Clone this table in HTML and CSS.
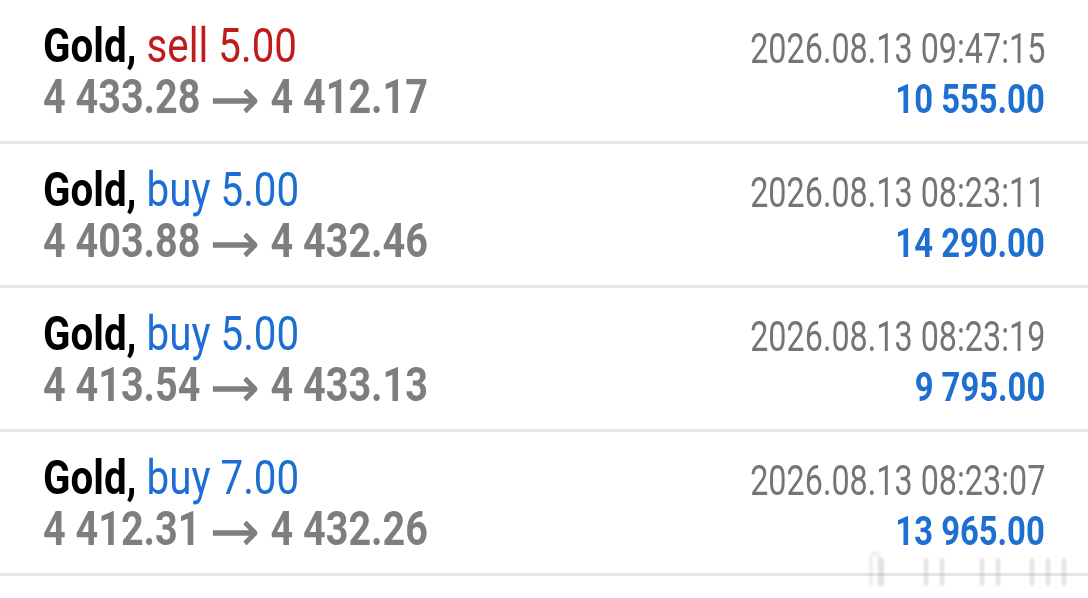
FILE: index.html
```html
<!DOCTYPE html>
<html>
<head>
<meta charset="utf-8">
<link rel="stylesheet" href="styles.css">
</head>
<body>
<div class="list">
  <div class="row">
    <div class="left">
      <div class="line"><span class="sx sx-l s1"><b class="sym">Gold,</b> <span class="sell">sell 5.00</span></span></div>
      <div class="line"><span class="sx sx-l s2 price">4 433.28<svg class="arrow" viewBox="0 0 54 24" preserveAspectRatio="none"><path d="M0 12H51M39 1.5L51.5 12L39 22.5"/></svg>4 412.17</span></div>
    </div>
    <div class="right">
      <div class="line time"><span class="sx sx-r s3">2026.08.13 09:47:15</span></div>
      <div class="line amount"><span class="sx sx-r s4">10 555.00</span></div>
    </div>
  </div>
  <div class="row">
    <div class="left">
      <div class="line"><span class="sx sx-l s1"><b class="sym">Gold,</b> <span class="buy">buy 5.00</span></span></div>
      <div class="line"><span class="sx sx-l s2 price">4 403.88<svg class="arrow" viewBox="0 0 54 24" preserveAspectRatio="none"><path d="M0 12H51M39 1.5L51.5 12L39 22.5"/></svg>4 432.46</span></div>
    </div>
    <div class="right">
      <div class="line time"><span class="sx sx-r s3">2026.08.13 08:23:11</span></div>
      <div class="line amount"><span class="sx sx-r s4">14 290.00</span></div>
    </div>
  </div>
  <div class="row">
    <div class="left">
      <div class="line"><span class="sx sx-l s1"><b class="sym">Gold,</b> <span class="buy">buy 5.00</span></span></div>
      <div class="line"><span class="sx sx-l s2 price">4 413.54<svg class="arrow" viewBox="0 0 54 24" preserveAspectRatio="none"><path d="M0 12H51M39 1.5L51.5 12L39 22.5"/></svg>4 433.13</span></div>
    </div>
    <div class="right">
      <div class="line time"><span class="sx sx-r s3">2026.08.13 08:23:19</span></div>
      <div class="line amount"><span class="sx sx-r s4">9 795.00</span></div>
    </div>
  </div>
  <div class="row">
    <div class="left">
      <div class="line"><span class="sx sx-l s1"><b class="sym">Gold,</b> <span class="buy">buy 7.00</span></span></div>
      <div class="line"><span class="sx sx-l s2 price">4 412.31<svg class="arrow" viewBox="0 0 54 24" preserveAspectRatio="none"><path d="M0 12H51M39 1.5L51.5 12L39 22.5"/></svg>4 432.26</span></div>
    </div>
    <div class="right">
      <div class="line time"><span class="sx sx-r s3">2026.08.13 08:23:07</span></div>
      <div class="line amount"><span class="sx sx-r s4">13 965.00</span></div>
    </div>
  </div>
</div>
<div class="mark">
  <span class="m m-hook"></span>
  <span class="m" style="left:18px"></span>
  <span class="m" style="left:62px"></span>
  <span class="m" style="left:78px"></span>
  <span class="m" style="left:118px"></span>
  <span class="m" style="left:134px"></span>
  <span class="m" style="left:168px"></span>
  <span class="m" style="left:184px"></span>
  <span class="m" style="left:200px"></span>
</div>
</body>
</html>
```
FILE: styles.css
```css
html, body {
  margin: 0;
  padding: 0;
  background: #ffffff;
}
body {
  font-family: Roboto, "Liberation Sans", sans-serif;
  width: 1088px;
  height: 598px;
  overflow: hidden;
  position: relative;
}
.list {
  display: flex;
  flex-direction: column;
}
.row {
  display: flex;
  justify-content: space-between;
  align-items: flex-start;
  padding: 0 43px;
  border-bottom: 3px solid #e6e6e6;
  box-sizing: border-box;
  height: 144px;
}
.line {
  line-height: 51px;
  white-space: nowrap;
}
.left {
  padding-top: 20px;
  font-size: 48px;
}
.right {
  padding-top: 23px;
  text-align: right;
}
.sx {
  display: inline-block;
}
.sx-l { transform-origin: left center; }
.sx-r { transform-origin: right center; }
.s1 { transform: scaleX(0.84); }
.s2 { transform: scaleX(0.824); }
.s3 { transform: scaleX(0.77); }
.s4 { transform: scaleX(0.80); }
.sym {
  font-weight: 700;
  color: #000000;
}
.sell { color: #c01b1b; }
.buy { color: #1c6fd1; }
.price {
  font-weight: 700;
  color: #7e7e7e;
}
.arrow {
  width: 54px;
  height: 24px;
  margin: 0 16px 0 15px;
  vertical-align: baseline;
  fill: none;
  stroke: #7e7e7e;
  stroke-width: 5.5;
}
.time {
  font-size: 42px;
  color: #757575;
}
.amount {
  font-size: 41px;
  font-weight: 700;
  color: #1e6fd0;
}
.mark {
  position: absolute;
  left: 862px;
  top: 552px;
  width: 226px;
  height: 36px;
  filter: blur(1.5px);
  opacity: 0.3;
}
.m {
  position: absolute;
  top: 6px;
  width: 4px;
  height: 28px;
  background: #9a9a9a;
}
.m-hook {
  left: 8px;
  top: 0;
  width: 6px;
  height: 32px;
  background: transparent;
  border: 2px solid #9a9a9a;
  border-bottom: none;
  border-radius: 6px 6px 0 0;
}
```
